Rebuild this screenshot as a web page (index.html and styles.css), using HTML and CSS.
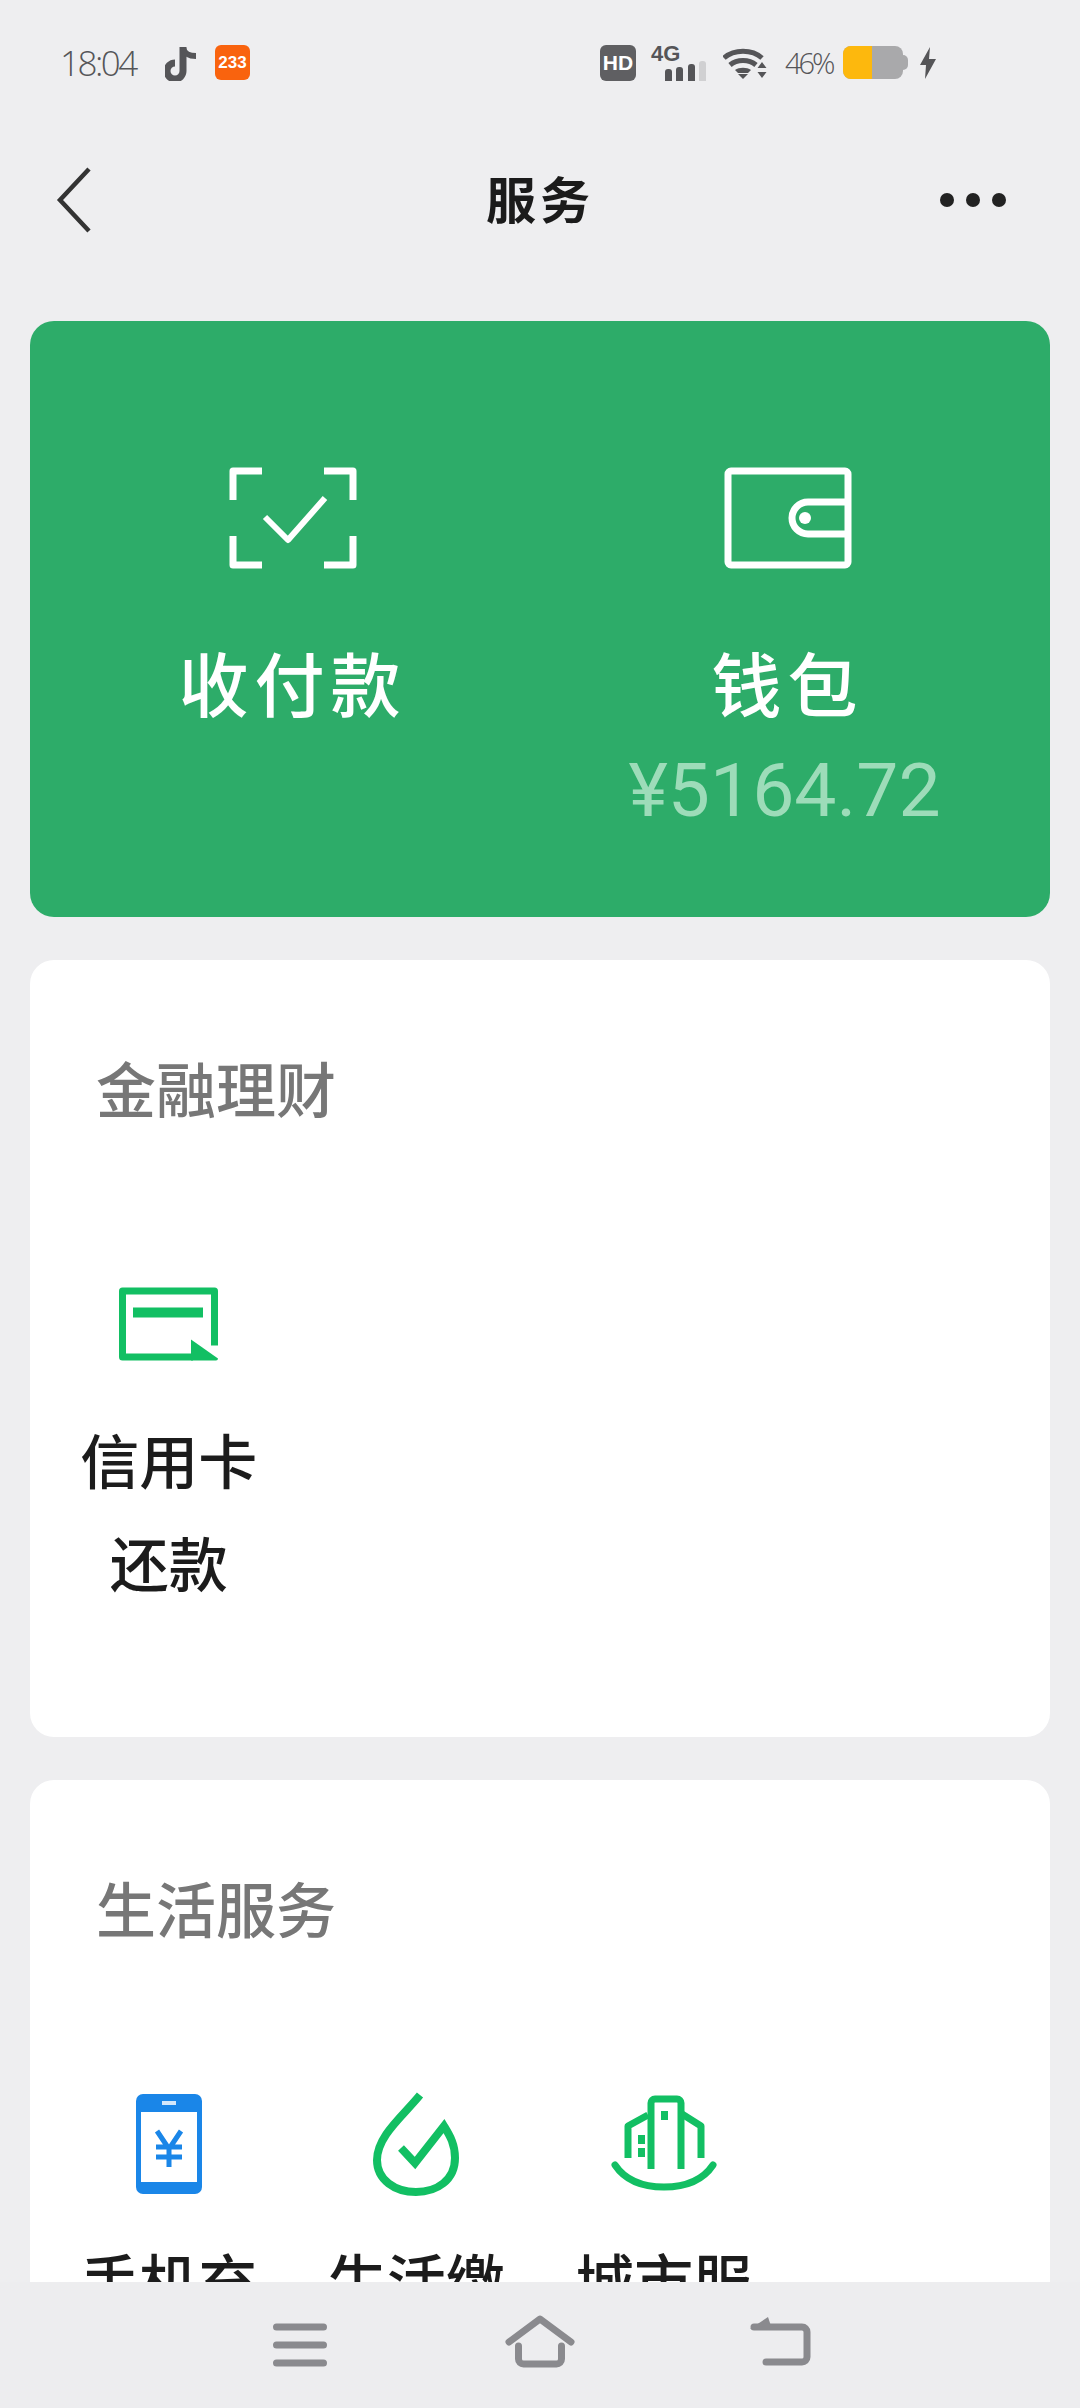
FILE: index.html
```html
<!DOCTYPE html>
<html lang="zh-CN">
<head>
  <meta charset="UTF-8" />
  <title>服务</title>
  <link rel="stylesheet" href="styles.css">
</head>
<body>
  <div class="page">
    <!-- Status bar -->
    <div class="status-bar">
      <div class="status-left">
        <span class="time">18:04</span>
        <svg class="tiktok" width="32" height="36" viewBox="0 0 32 36"><path d="M18 2V26a8 8 0 1 1-8-8" fill="none" stroke="#555558" stroke-width="7"/><path d="M18 3c1 5 6 8 13 8" fill="none" stroke="#555558" stroke-width="6"/></svg>
        <span class="badge-233">233</span>
      </div>
      <div class="status-right">
        <span class="hd">HD</span>
        <div class="signal">
          <span class="net">4G</span>
          <div class="bars">
            <i class="bar b1"></i><i class="bar b2"></i><i class="bar b3"></i><i class="bar b4"></i>
          </div>
        </div>
        <svg class="wifi" width="44" height="32" viewBox="0 0 44 32"><g fill="none" stroke="#555558" stroke-width="5"><path d="M1 11C11 2 29 2 39 11"/><path d="M7 18c7-6 19-6 26 0"/></g><path d="M12 23c4-3 12-3 16 0l-3 3H15z" fill="#555558"/><path d="M15 27h10l-5 5z" fill="#555558"/><path d="M39 15l4.500 6h-9zM39 31l4.500-6h-9z" fill="#555558"/></svg>
        <span class="pct">46%</span>
        <div class="battery">
          <div class="battery-body"><div class="battery-fill"></div></div>
          <div class="battery-nub"></div>
        </div>
        <svg class="bolt" width="16" height="32" viewBox="0 0 16 32"><path d="M10 0L0 18h6L5 32l11-20H9z" fill="#555558"/></svg>
      </div>
    </div>

    <!-- Title bar -->
    <header class="title-bar">
      <svg class="back" width="36" height="66" viewBox="0 0 36 66"><path d="M33 2L4 33l29 31" fill="none" stroke="#333" stroke-width="4.500"/></svg>
      <h1>服务</h1>
      <div class="more"><i></i><i></i><i></i></div>
    </header>

    <main class="content">
      <section class="card-green">
        <div class="pay-item">
          <svg width="128" height="102" viewBox="0 0 128 102"><g fill="none" stroke="#fff" stroke-width="7" stroke-linejoin="round"><path d="M33 4H4v29M95 4h29v29M33 98H4V69M95 98h29V69"/><path d="M36 50l23 23 37-42" stroke-width="6"/></g></svg>
          <div class="pay-label">收付款</div>
        </div>
        <div class="pay-item">
          <svg width="128" height="102" viewBox="0 0 128 102"><rect x="4" y="4" width="120" height="94" rx="3" fill="none" stroke="#fff" stroke-width="7"/><path d="M124 35H84a15 15 0 0 0 0 32h40" fill="none" stroke="#fff" stroke-width="7"/><circle cx="81" cy="51" r="6" fill="#fff"/></svg>
          <div class="pay-label">钱包</div>
          <div class="balance">¥5164.72</div>
        </div>
      </section>

      <section class="card card-finance">
        <h2>金融理财</h2>
        <div class="grid">
          <div class="item">
            <svg width="99" height="73" viewBox="0 0 99 73"><path d="M95.500 58V3.500H3.500V69.500H74" fill="none" stroke="#12bf63" stroke-width="7" stroke-linejoin="round"/><rect x="14" y="20" width="70" height="10" fill="#12bf63"/><path d="M72 52L99 71a2 2 0 0 1-2 2H72z" fill="#12bf63"/></svg>
            <div class="item-label">信用卡还款</div>
          </div>
        </div>
      </section>

      <section class="card">
        <h2>生活服务</h2>
        <div class="grid">
          <div class="item">
            <svg width="66" height="100" viewBox="0 0 66 100"><rect width="66" height="100" rx="7" fill="#1a86e8"/><rect x="5" y="18" width="56" height="70" fill="#fff"/><rect x="26" y="7" width="14" height="4" fill="#d4e8fb"/><path d="M21 37l12 18 12-18M33 55v18M20 53h26M20 63h26" fill="none" stroke="#1a86e8" stroke-width="5"/></svg>
            <div class="item-label">手机充值</div>
          </div>
          <div class="item">
            <svg width="86" height="104" viewBox="0 0 86 104"><path d="M47 3C30 24 4 44 4 68C4 88 22 100 43 100C64 100 82 88 82 66C82 52 77 44 71 34L42 71L28 56" fill="none" stroke="#12bf63" stroke-width="8"/></svg>
            <div class="item-label">生活缴费</div>
          </div>
          <div class="item">
            <svg width="106" height="96" viewBox="0 0 106 96"><g fill="none" stroke="#12bf63" stroke-width="7" stroke-linejoin="round"><path d="M17 62V30L37 19"/><path d="M40 73V7a4 4 0 0 1 4-4H66a4 4 0 0 1 4 4V73"/><path d="M71 18L90 30V62"/></g><g fill="#12bf63"><rect x="50" y="15" width="7" height="9"/><rect x="27" y="39" width="7" height="9"/><rect x="27" y="52" width="7" height="9"/></g><path d="M4 69C14 84 32 91 53 91S92 84 102 69" fill="none" stroke="#12bf63" stroke-width="7" stroke-linecap="round"/></svg>
            <div class="item-label">城市服务</div>
          </div>
        </div>
      </section>
    </main>

    <!-- Bottom navigation -->
    <nav class="nav-bar">
      <svg width="72" height="54" viewBox="0 0 72 54"><path d="M12.500 13h47M12.500 31h47M12.500 49h47" stroke="#8a8a8e" stroke-width="7" stroke-linecap="round"/></svg>
      <svg width="72" height="54" viewBox="0 0 72 54"><path d="M5 28L36 5l31 23" fill="none" stroke="#8a8a8e" stroke-width="7" stroke-linecap="round" stroke-linejoin="round"/><path d="M14.500 32v13a5 5 0 0 0 5 5h33a5 5 0 0 0 5-5V32" fill="none" stroke="#8a8a8e" stroke-width="7" stroke-linecap="round"/></svg>
      <svg width="72" height="54" viewBox="0 0 72 54"><path d="M6 15L24 3l4 12z" fill="#8a8a8e"/><path d="M10 13H58a5 5 0 0 1 5 5V43a5 5 0 0 1-5 5H22" fill="none" stroke="#8a8a8e" stroke-width="7" stroke-linecap="round"/></svg>
    </nav>
  </div>
</body>
</html>
```

FILE: styles.css
```css
* {
  box-sizing: border-box;
}

body {
  margin: 0;
  background-color: #eeeef0;
  font-family: "Noto Sans CJK SC", "Noto Sans", sans-serif;
}

.page {
  display: flex;
  flex-direction: column;
  width: 1080px;
  height: 2408px;
  overflow: hidden;
}

.status-bar {
  display: flex;
  justify-content: space-between;
  align-items: center;
  flex: none;
  height: 125px;
  padding: 0 144px 0 60px;
  color: #555558;
}

.status-left,
.status-right {
  display: flex;
  align-items: center;
}

.time {
  width: 105px;
  font-family: "Open Sans", sans-serif;
  font-size: 35px;
  font-weight: 300;
  letter-spacing: -2.5px;
}

.tiktok {
  margin-right: 18px;
}

.badge-233 {
  width: 35px;
  height: 35px;
  border-radius: 6px;
  background-color: #f9630e;
  color: #fff;
  font-family: "Liberation Sans", sans-serif;
  font-size: 17px;
  font-weight: bold;
  line-height: 35px;
  text-align: center;
}

.hd {
  width: 36px;
  height: 36px;
  margin-right: 15px;
  border-radius: 6px;
  background-color: #5f5f62;
  color: #fff;
  font-family: "Liberation Sans", sans-serif;
  font-size: 21px;
  font-weight: bold;
  line-height: 36px;
  text-align: center;
}

.signal {
  position: relative;
  width: 55px;
  height: 36px;
  margin-right: 17px;
}

.net {
  position: absolute;
  top: -2px;
  left: 0;
  font-family: "Liberation Sans", sans-serif;
  font-size: 22px;
  font-weight: bold;
  line-height: 22px;
}

.bars {
  position: absolute;
  right: 0;
  bottom: 0;
  display: flex;
  align-items: flex-end;
  gap: 4.5px;
}

.bar {
  width: 7px;
  border-radius: 3px 3px 0 0;
  background-color: #555558;
}

.b1 { height: 12px; }
.b2 { height: 14px; }
.b3 { height: 17px; }
.b4 { height: 20px; background-color: #d0d0d2; }

.wifi {
  margin-right: 18px;
}

.pct {
  width: 58px;
  font-family: "Open Sans", sans-serif;
  font-size: 29px;
  font-weight: 300;
  letter-spacing: -3px;
}

.battery {
  display: flex;
  align-items: center;
  margin-right: 12px;
}

.battery-body {
  width: 60px;
  height: 33px;
  overflow: hidden;
  border-radius: 8px;
  background-color: #a9a9ab;
}

.battery-fill {
  width: 29px;
  height: 100%;
  background-color: #fdb80d;
}

.battery-nub {
  width: 5px;
  height: 15px;
  border-radius: 0 5px 5px 0;
  background-color: #a9a9ab;
}

.title-bar {
  display: grid;
  grid-template-columns: 1fr auto 1fr;
  align-items: center;
  flex: none;
  height: 150px;
  padding: 0 72px;
}

.back {
  margin-left: -16px;
}

.title-bar h1 {
  margin: 0 0 6px;
  color: #1b1b1b;
  font-size: 50px;
  font-weight: 700;
  letter-spacing: 4px;
}

.more {
  display: flex;
  justify-self: end;
  gap: 12px;
  margin-right: 2px;
}

.more i {
  width: 14px;
  height: 14px;
  border-radius: 50%;
  background-color: #222;
}

.content {
  display: flex;
  flex-direction: column;
  flex: 1;
  gap: 43px;
  min-height: 0;
  padding: 46px 30px 0;
  overflow: hidden;
}

.card-green {
  display: grid;
  grid-template-columns: 1fr 1fr;
  flex: none;
  height: 596px;
  padding: 146px 15px 0;
  border-radius: 24px;
  background-color: #2dac69;
}

.pay-item {
  display: flex;
  flex-direction: column;
  align-items: center;
}

.pay-label {
  margin-top: 68px;
  color: #fff;
  font-size: 70px;
  font-weight: 500;
  letter-spacing: 6px;
  line-height: 90px;
}

.balance {
  margin-top: 18px;
  margin-right: 6px;
  color: #9ddcb9;
  font-family: Roboto, sans-serif;
  font-size: 75px;
  line-height: 90px;
}

.card {
  flex: none;
  padding: 92px 15px 0;
  border-radius: 24px;
  background-color: #fff;
}

.card-finance {
  height: 777px;
}

.card h2 {
  margin: 0 0 0 51px;
  color: #777;
  font-size: 60px;
  font-weight: 500;
  line-height: 70px;
}

.grid {
  display: grid;
  grid-template-columns: repeat(4, 1fr);
  margin-top: 150px;
}

.item {
  display: flex;
  flex-direction: column;
  align-items: center;
  padding: 0 30px;
  text-align: center;
}

.item svg {
  flex: none;
  height: 104px;
}

.item-label {
  margin-top: 31px;
  color: #1c1c1c;
  font-size: 59px;
  font-weight: 500;
  line-height: 103px;
}

.nav-bar {
  display: flex;
  justify-content: center;
  align-items: center;
  flex: none;
  gap: 168px;
  height: 126px;
  padding-bottom: 9px;
  background-color: #ededef;
}
```
